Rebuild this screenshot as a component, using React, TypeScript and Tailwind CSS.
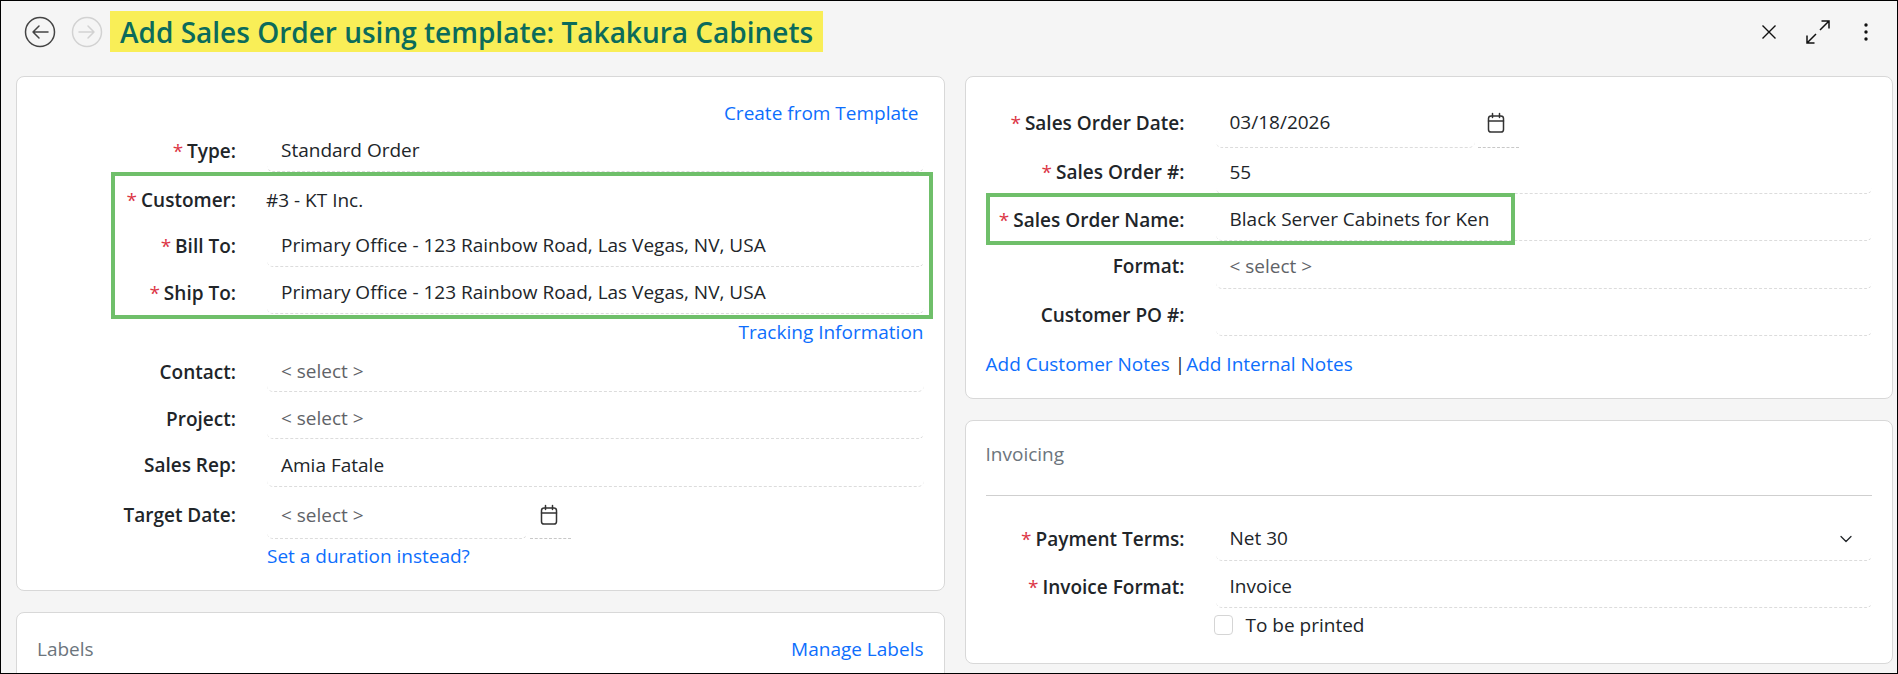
import { ChevronDown } from 'lucide-react';
import type { ReactNode } from 'react';

const Calendar = () => (
    <svg width="20" height="22" viewBox="0 0 20 22" fill="none" stroke="#333" strokeWidth="1.5" strokeLinecap="round">
        <rect x="2.5" y="4" width="15" height="16" rx="2.6" />
        <path d="M2.5 9h15M6.5 1.5v4M13.5 1.5v4" />
    </svg>
);

const Star = () => <span className="text-[#dc3545] font-normal mr-[4px]">*</span>;

type FieldProps = {
    label: string;
    req?: boolean;
    h: string;
    children?: ReactNode;
    icon?: boolean;
    w?: string;
    nudge?: string;
    noLine?: boolean;
};

const Field = ({ label, req, h, children, icon, w, nudge = 'pt-[3px]', noLine }: FieldProps) => (
    <div className={`flex ${h}`}>
        <div className={`w-[219px] shrink-0 flex items-center justify-end font-semibold text-[#212529] ${nudge}`}>
            {req && <Star />}{label}:
        </div>
        <div className="flex flex-1 ml-[31px]">
            <div className={`${w ?? 'flex-1'} flex items-center pl-[14px] ${nudge} ${noLine ? '' : 'border-b border-dashed border-[#dcdcdc] rounded-b-md'}`}>
                {children}
            </div>
            {icon && (
                <div className={`ml-[3px] w-[41px] flex items-center justify-center pr-[4px] border-b border-dashed border-[#c8c8c8] ${nudge}`}>
                    <Calendar />
                </div>
            )}
        </div>
    </div>
);

const Select = () => <span className="text-[#5f6368]">&lt; select &gt;</span>;

const Link = ({ children, className }: { children: ReactNode; className?: string }) => (
    <span className={`text-[#0d6efd] ${className ?? ''}`}>{children}</span>
);

export default function App() {
    return (
        <div className="w-full h-screen overflow-hidden border border-black bg-[#f5f5f5] font-['Open_Sans',sans-serif] text-[19px] text-[#212529]">
            {/* Title bar */}
            <div className="flex items-center h-[60px] pl-[23px] pr-[29px] pt-px">
                <svg width="32" height="32" viewBox="0 0 32 32" fill="none" stroke="#444" strokeWidth="1.5" strokeLinecap="round" strokeLinejoin="round">
                    <circle cx="16" cy="16" r="14.5" />
                    <path d="M24 16H9M15 10l-6 6 6 6" />
                </svg>
                <svg className="ml-[15px]" width="32" height="32" viewBox="0 0 32 32" fill="none" stroke="#d2d2d2" strokeWidth="1.5" strokeLinecap="round" strokeLinejoin="round">
                    <circle cx="16" cy="16" r="14.5" />
                    <path d="M8 16h15M17 10l6 6-6 6" />
                </svg>
                <h1 className="ml-[7px] h-[41px] px-[10px] bg-[#f9ee57] flex items-center text-[28px] font-semibold text-[#0b6b5b] whitespace-nowrap">
                    Add Sales Order using template: Takakura Cabinets
                </h1>
                <div className="ml-auto flex items-center">
                    <svg width="16" height="16" viewBox="0 0 16 16" fill="none" stroke="#111" strokeWidth="1.4">
                        <path d="M1.5 1.5l13 13M14.5 1.5l-13 13" />
                    </svg>
                    <svg className="ml-[29px]" width="24" height="24" viewBox="0 0 24 24" fill="none" stroke="#111" strokeWidth="1.5">
                        <path d="M14 10l9-9M15.500 1h7.500v7.500M10 14l-9 9M1 15.500v7.500h7.500" />
                    </svg>
                    <svg className="ml-[34px]" width="4" height="18" viewBox="0 0 4 18" fill="#111">
                        <circle cx="2" cy="2" r="1.7" />
                        <circle cx="2" cy="9" r="1.7" />
                        <circle cx="2" cy="16" r="1.7" />
                    </svg>
                </div>
            </div>

            <div className="grid grid-cols-2 gap-x-[20px] pl-[15px] pr-[4px] pt-[15px]">
                {/* Left column */}
                <div className="flex flex-col gap-[21px]">
                    <div className="relative h-[515px] bg-white border border-[#d8d8d8] rounded-lg pr-[20px]">
                        <div className="h-[50px] flex items-end justify-end">
                            <Link className="mr-[5px]">Create from Template</Link>
                        </div>
                        <Field label="Type" req h="h-[45px]">Standard Order</Field>
                        <Field label="Customer" req h="h-[48px]" nudge="pt-[8px]" noLine><span className="-ml-[15px]">#3 - KT Inc.</span></Field>
                        <Field label="Bill To" req h="h-[47px]" nudge="pt-[5px]">Primary Office - 123 Rainbow Road, Las Vegas, NV, USA</Field>
                        <Field label="Ship To" req h="h-[47px]" nudge="pt-[5px]">Primary Office - 123 Rainbow Road, Las Vegas, NV, USA</Field>
                        <div className="h-[35px] flex items-center justify-end pt-[2px]">
                            <Link>Tracking Information</Link>
                        </div>
                        <Field label="Contact" h="h-[43px]"><Select /></Field>
                        <Field label="Project" h="h-[47px]" nudge="pt-[7px]"><Select /></Field>
                        <Field label="Sales Rep" h="h-[48px]" nudge="pt-[5px]">Amia Fatale</Field>
                        <Field label="Target Date" h="h-[52px]" icon w="w-[260px]" nudge="pt-[5px]"><Select /></Field>
                        <div className="ml-[250px] mt-[3px]"><Link>Set a duration instead?</Link></div>

                        {/* Green annotation */}
                        <div className="absolute left-[94px] top-[95px] w-[822px] h-[147px] border-[4px] border-[#6fbf6a]" />
                    </div>
                    <div className="h-[120px] bg-white border border-[#d8d8d8] rounded-lg flex items-start justify-between pl-[20px] pr-[20px] pt-[22px]">
                        <span className="text-[#6c757d]">Labels</span>
                        <Link>Manage Labels</Link>
                    </div>
                </div>

                {/* Right column */}
                <div className="flex flex-col gap-[21px]">
                    <div className="relative h-[323px] bg-white border border-[#d8d8d8] rounded-lg pr-[20px]">
                        <div className="h-[25px]" />
                        <Field label="Sales Order Date" req h="h-[46px]" icon w="w-[259px]" nudge="pb-[4px]">03/18/2026</Field>
                        <Field label="Sales Order #" req h="h-[46px]">55</Field>
                        <Field label="Sales Order Name" req h="h-[47px]" nudge="pt-[5px]">Black Server Cabinets for Ken</Field>
                        <Field label="Format" h="h-[48px]"><Select /></Field>
                        <Field label="Customer PO #" h="h-[47px]" nudge="pt-[5px]" />
                        <div className="mt-[14px] ml-[20px]">
                            <Link>Add Customer Notes</Link> |<Link className="ml-[1px]">Add Internal Notes</Link>
                        </div>

                        {/* Green annotation */}
                        <div className="absolute left-[20px] top-[116px] w-[529px] h-[52px] border-[4px] border-[#6fbf6a]" />
                    </div>
                    <div className="h-[244px] bg-white border border-[#d8d8d8] rounded-lg pr-[20px]">
                        <div className="ml-[20px] h-[75px] pt-[19px] border-b border-[#cfcfcf] text-[#6c757d]">Invoicing</div>
                        <div className="pt-[18px]">
                            <Field label="Payment Terms" req h="h-[47px]">
                                Net 30
                                <ChevronDown className="ml-auto mr-[16px]" size={20} strokeWidth={1.5} />
                            </Field>
                            <Field label="Invoice Format" req h="h-[47px]" nudge="pt-[5px]">Invoice</Field>
                            <div className="ml-[248px] mt-[3px] flex items-center">
                                <span className="w-[19px] h-[20px] bg-white border border-[#d5d5d5] rounded" />
                                <span className="ml-[13px]">To be printed</span>
                            </div>
                        </div>
                    </div>
                </div>
            </div>
        </div>
    );
}
